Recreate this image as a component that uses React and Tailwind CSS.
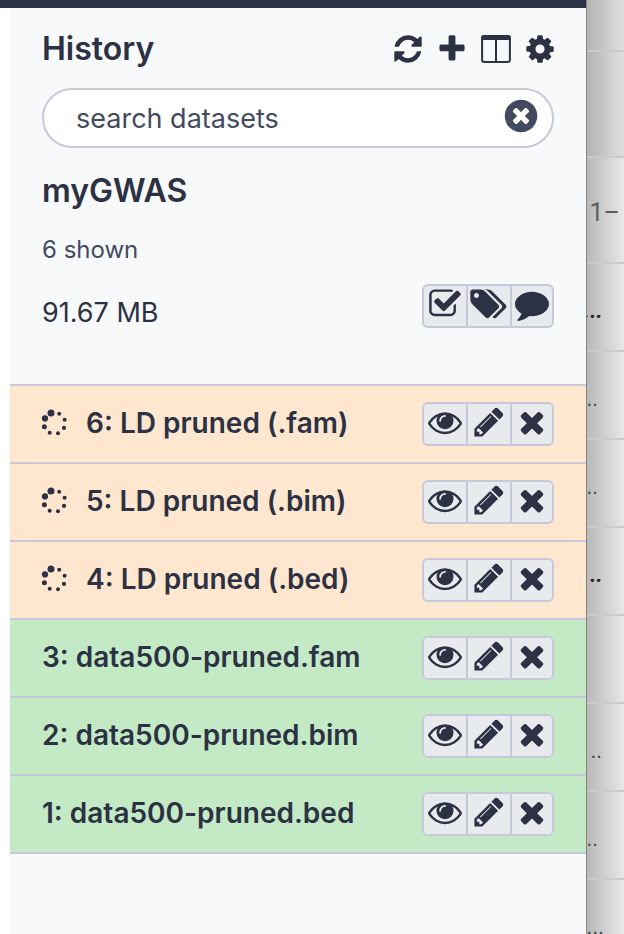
import React from "react";

const paths = {
  refresh:
    "M1639 1056q0 5-1 7-64 268-268 434.5t-478 166.5q-146 0-282.5-55t-243.5-157l-129 129q-19 19-45 19t-45-19-19-45v-448q0-26 19-45t45-19h448q26 0 45 19t19 45-19 45l-137 137q71 66 161 102t187 36q134 0 250-65t186-179q11-17 53-117 8-23 30-23h192q13 0 22.5 9.5t9.5 22.5zm25-800v448q0 26-19 45t-45 19h-448q-26 0-45-19t-19-45 19-45l138-138q-148-137-349-137-134 0-250 65t-186 179q-11 17-53 117-8 23-30 23h-199q-13 0-22.5-9.5t-9.5-22.5v-7q65-268 270-434.5t480-166.5q146 0 284 55.5t245 156.5l130-129q19-19 45-19t45 19 19 45z",
  plus: "M1600 736v192q0 40-28 68t-68 28h-416v416q0 40-28 68t-68 28h-192q-40 0-68-28t-28-68v-416h-416q-40 0-68-28t-28-68v-192q0-40 28-68t68-28h416v-416q0-40 28-68t68-28h192q40 0 68 28t28 68v416h416q40 0 68 28t28 68z",
  cog: "M1152 896q0-106-75-181t-181-75-181 75-75 181 75 181 181 75 181-75 75-181zm512-109v222q0 12-8 23t-20 13l-185 28q-19 54-39 91 35 50 107 138 10 12 10 25t-9 23q-27 37-99 108t-94 71q-12 0-26-9l-138-108q-44 23-91 38-16 136-29 186-7 28-36 28h-222q-14 0-24.5-8.5t-11.5-21.5l-28-184q-49-16-90-37l-141 107q-10 9-25 9-14 0-25-11-126-114-165-168-7-10-7-23 0-12 8-23 15-21 51-66.5t54-70.5q-27-50-41-99l-183-27q-13-2-21-12.5t-8-23.5v-222q0-12 8-23t19-13l186-28q14-46 39-92-40-57-107-138-10-12-10-24 0-10 9-23 26-36 98.5-107.5t94.5-71.5q13 0 26 10l138 107q44-23 91-38 16-136 29-186 7-28 36-28h222q14 0 24.5 8.5t11.5 21.5l28 184q49 16 90 37l142-107q9-9 24-9 13 0 25 10 129 119 165 170 7 8 7 22 0 12-8 23-15 21-51 66.5t-54 70.5q26 50 41 98l183 28q13 2 21 12.5t8 23.5z",
  clear:
    "M1277 1122q0-26-19-45l-181-181 181-181q19-19 19-45 0-27-19-46l-90-90q-19-19-46-19-26 0-45 19l-181 181-181-181q-19-19-45-19-27 0-46 19l-90 90q-19 19-19 46 0 26 19 45l181 181-181 181q-19 19-19 45 0 27 19 46l90 90q19 19 46 19 26 0 45-19l181-181 181 181q19 19 45 19 27 0 46-19l90-90q19-19 19-46zm387-226q0 209-103 385.5t-279.5 279.5-385.5 103-385.5-103-279.5-279.5-103-385.5 103-385.5 279.5-279.5 385.5-103 385.5 103 279.5 279.5 103 385.5z",
  check:
    "M1472 930v318q0 119-84.5 203.5t-203.5 84.5h-832q-119 0-203.5-84.5t-84.5-203.5v-832q0-119 84.5-203.5t203.5-84.5h832q63 0 117 25 15 7 18 23 3 17-9 29l-49 49q-10 10-23 10-3 0-9-2-23-6-45-6h-832q-66 0-113 47t-47 113v832q0 66 47 113t113 47h832q66 0 113-47t47-113v-254q0-13 9-22l64-64q10-10 23-10 6 0 12 3 20 8 20 29zm231-489l-814 814q-24 24-57 24t-57-24l-430-430q-24-24-24-57t24-57l110-110q24-24 57-24t57 24l263 263 647-647q24-24 57-24t57 24l110 110q24 24 24 57t-24 57z",
  tags: "M384 448q0-53-37.5-90.5t-90.5-37.5-90.5 37.5-37.5 90.5 37.5 90.5 90.5 37.5 90.5-37.5 37.5-90.5zm1067 576q0 53-37 90l-491 492q-39 37-91 37-53 0-90-37l-715-716q-38-37-64.5-101t-26.5-117v-416q0-52 38-90t90-38h416q53 0 117 26.5t102 64.5l715 714q37 39 37 91zm384 0q0 53-37 90l-491 492q-39 37-91 37-36 0-59-14t-53-45l470-470q37-37 37-90 0-52-37-91l-715-714q-38-38-102-64.5t-117-26.5h224q53 0 117 26.5t102 64.5l715 714q37 39 37 91z",
  comment:
    "M1792 896q0 174-120 321.5t-326 233-450 85.5q-70 0-145-8-198 175-460 242-49 14-114 22-17 2-30.5-9t-17.5-29v-1q-3-4-.5-12t2-10 4.5-9.5l6-9 7-8.5 8-9q7-8 31-34.5t34.5-38 31-39.5 32.5-51 27-59 26-76q-157-89-247.5-220t-90.5-281q0-130 71-248.5t191-204.5 286-136.5 348-50.5q244 0 450 85.5t326 233 120 321.5z",
  eye: "M1664 960q-152-236-381-353 61 104 61 225 0 185-131.5 316.5t-316.5 131.5-316.5-131.5-131.5-316.5q0-121 61-225-229 117-381 353 133 205 333.5 326.5t434.5 121.5 434.5-121.5 333.5-326.5zm-720-384q0-20-14-34t-34-14q-125 0-214.5 89.5t-89.5 214.5q0 20 14 34t34 14 34-14 14-34q0-86 61-147t147-61q20 0 34-14t14-34zm848 384q0 34-20 69-140 230-376.5 368.5t-499.5 138.5-499.5-139-376.5-368q-20-35-20-69t20-69q140-229 376.5-368t499.5-139 499.5 139 376.5 368q20 35 20 69z",
  pencil:
    "M491 1536l91-91-235-235-91 91v107h128v128h107zm523-928q0-22-22-22-10 0-17 7l-542 542q-7 7-7 17 0 22 22 22 10 0 17-7l542-542q7-7 7-17zm-54-192l416 416-832 832h-416v-416zm683 96q0 53-37 90l-166 166-416-416 166-165q36-38 90-38 53 0 91 38l235 234q37 39 37 91z",
  times:
    "M1490 1322q0 40-28 68l-136 136q-28 28-68 28t-68-28l-294-294-294 294q-28 28-68 28t-68-28l-136-136q-28-28-28-68t28-68l294-294-294-294q-28-28-28-68t28-68l136-136q28-28 68-28t68 28l294 294 294-294q28-28 68-28t68 28l136 136q28 28 28 68t-28 68l-294 294 294 294q28 28 28 68z",
};

function Icon({ name, className, viewBox = "0 0 1792 1792" }) {
  return (
    <svg viewBox={viewBox} fill="currentColor" aria-hidden="true" className={className}>
      <path d={paths[name]} />
    </svg>
  );
}

function ColumnsIcon() {
  return (
    <svg viewBox="0 0 32 32" aria-hidden="true" className="size-8">
      <rect x="2.1" y="3.1" width="27.8" height="25.8" rx="2.2" fill="none" stroke="currentColor" strokeWidth="2" />
      <path d="M1.300 7V4.500Q1.300 2.200 3.600 2.200H28.400Q30.700 2.200 30.700 4.500V7Z" fill="currentColor" />
      <path d="M16 6V29" stroke="currentColor" strokeWidth="2" />
    </svg>
  );
}

function Spinner() {
  return (
    <svg viewBox="0 0 26 26" fill="currentColor" aria-hidden="true" className="mr-[18px] size-[26px] shrink-0 overflow-visible">
      <circle cx="9" cy="1.900" r="3.500" />
      <circle cx="17.200" cy="2.700" r="2" />
      <circle cx="22.600" cy="8.700" r="2" />
      <circle cx="22" cy="16.900" r="2.100" />
      <circle cx="16" cy="22.300" r="2" />
      <circle cx="7.700" cy="21.700" r="2" />
      <circle cx="2.400" cy="15.700" r="2.500" />
      <circle cx="3" cy="7.400" r="3.100" />
    </svg>
  );
}

function ButtonGroup({ items }) {
  return (
    <div className="grid h-11 w-[132px] shrink-0 grid-cols-[44px_44px_40px] divide-x-2 divide-[#c6c9da] overflow-hidden rounded-md border-2 border-[#c6c9da] bg-[#e8ebee]">
      {items.map(([icon, label]) => (
        <button key={icon} type="button" aria-label={label} className="flex justify-center pt-px">
          <Icon name={icon} viewBox={icon === "tags" ? "22 0 1792 1792" : undefined} className="size-[34px] shrink-0 overflow-visible" />
        </button>
      ))}
    </div>
  );
}

const datasets = [
  { name: "6: LD pruned (.fam)", running: true },
  { name: "5: LD pruned (.bim)", running: true },
  { name: "4: LD pruned (.bed)", running: true },
  { name: "3: data500-pruned.fam" },
  { name: "2: data500-pruned.bim" },
  { name: "1: data500-pruned.bed" },
];

const behind = [
  { text: "", row: "h-[52px] bg-black/3" },
  { text: "", row: "h-[106px] bg-black/3" },
  { text: "1–", row: "h-[106px] pr-1 text-[25px] text-[#5b5e62]" },
  { text: "...", row: "h-[88px] pr-[22px] text-[22px] font-bold text-[#222222]" },
  { text: "..", row: "h-[88px] pr-[26px] text-[22px] text-[#45484c]" },
  { text: "..", row: "h-[88px] pr-[26px] text-[22px] text-[#45484c]" },
  { text: "..", row: "h-[88px] pr-[22px] text-[22px] font-bold text-[#222222]" },
  { text: "", row: "h-[88px]" },
  { text: "..", row: "h-[88px] pr-[22px] text-[22px] text-[#45484c]" },
  { text: "..", row: "h-[88px] pr-[26px] text-[22px] text-[#45484c]" },
  { text: "...", row: "h-[88px] pr-5 text-[22px] text-[#45484c]" },
];

export default function App() {
  return (
    <div className="flex h-screen overflow-hidden bg-white font-['Inter','Liberation_Sans',sans-serif] text-[#2c3143]">
      <div className="flex min-w-0 flex-1 flex-col">
        <div className="h-2 shrink-0 bg-[#2c3143]" />
        <main className="ml-2.5 flex-1 bg-[#f8f9fb]">
          <header className="px-8 pt-[25px] pb-14">
            <div className="-mr-0.5 flex h-8 items-center justify-between">
              <h1 className="text-[32px] leading-8 font-semibold">History</h1>
              <div className="flex gap-3">
                <button type="button" aria-label="Refresh history"><Icon name="refresh" className="size-8" /></button>
                <button type="button" aria-label="Create history"><Icon name="plus" className="size-8" /></button>
                <button type="button" aria-label="View all histories"><ColumnsIcon /></button>
                <button type="button" aria-label="History options"><Icon name="cog" className="size-8" /></button>
              </div>
            </div>
            <div className="mt-[23px] flex h-[60px] items-center rounded-full border-2 border-[#c6c9da] bg-white pr-3 pl-8 text-[#434a60]">
              <input
                type="text"
                aria-label="Search datasets"
                placeholder="search datasets"
                className="min-w-0 flex-1 bg-transparent pt-0.5 text-[27px] outline-none placeholder:text-[#434a60]"
              />
              <button type="button" aria-label="Clear search" className="pb-1"><Icon name="clear" className="size-[38px]" /></button>
            </div>
            <h2 className="mt-6 text-[32px] leading-[38px] font-semibold">myGWAS</h2>
            <p className="mt-6 text-2xl leading-8 text-[#434a60]">6 shown</p>
            <div className="mt-[18px] flex items-end justify-between">
              <span className="text-[27px] leading-[30px]">91.67 MB</span>
              <ButtonGroup items={[["check", "Select datasets"], ["tags", "Edit tags"], ["comment", "Edit annotation"]]} />
            </div>
          </header>
          <ul className="border-t-2 border-[#c6c9da]">
            {datasets.map((d) => (
              <li
                key={d.name}
                className={`flex h-[78px] items-center border-b-2 border-[#c6c9da] px-8 ${d.running ? "bg-[#ffe6cf]" : "bg-[#c3eac5]"}`}
              >
                {d.running && <Spinner />}
                <span className="min-w-0 flex-1 truncate pb-0.5 text-[28px] leading-8 font-semibold">{d.name}</span>
                <ButtonGroup items={[["eye", "View data"], ["pencil", "Edit attributes"], ["times", "Delete"]]} />
              </li>
            ))}
          </ul>
        </main>
      </div>
      <aside className="w-[38px] shrink-0 overflow-hidden border-l border-[#858585] bg-linear-to-r from-[#b9b9b9] to-[#e8e8e8] font-['Roboto','Liberation_Sans',sans-serif]">
        {behind.map((b, i) => (
          <div key={i} className={`flex items-center justify-end border-b-2 border-[#c7cbcb] pt-1.5 ${b.row}`}>
            <span>{b.text}</span>
          </div>
        ))}
      </aside>
    </div>
  );
}
